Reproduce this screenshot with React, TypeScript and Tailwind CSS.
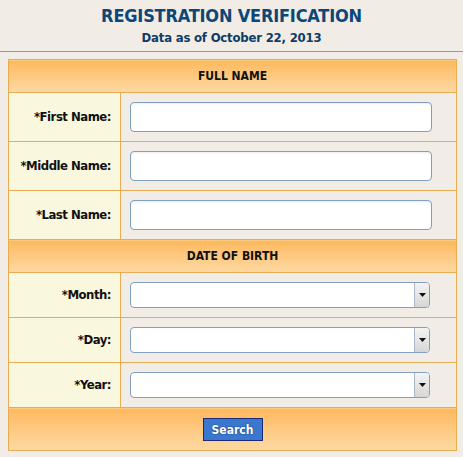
const font = { fontFamily: '"DejaVu Sans Condensed", "DejaVu Sans", Verdana, sans-serif' };

function Chevron() {
  return (
    <span className="flex h-full w-[15px] items-center justify-center rounded-r-[3px] border-l border-[#aab8c8] bg-gradient-to-b from-[#f4f4f4] to-[#d6d6d6]">
      <svg width="7" height="4" viewBox="0 0 7 4">
        <path d="M0 0h7L3.5 4z" fill="#111" />
      </svg>
    </span>
  );
}

const labelCls =
  'whitespace-nowrap border border-[#e8ad52] bg-[#f9f8de] pr-[9px] text-right text-[13px] font-bold tracking-[-0.5px] text-[#111]';

function TextRow({ label }: { label: string }) {
  return (
    <tr className="h-[49px]">
      <td className={labelCls}>*{label}:</td>
      <td className="border border-[#e8ad52] pl-[9px]">
        <input
          type="text"
          className="block h-[30px] w-[302px] rounded-[4px] border border-[#7f9fc3] bg-white shadow-[inset_0_1px_2px_rgba(0,0,0,0.08)] outline-none"
        />
      </td>
    </tr>
  );
}

function SelectRow({ label }: { label: string }) {
  return (
    <tr className="h-[45px]">
      <td className={labelCls}>*{label}:</td>
      <td className="border border-[#e8ad52] pl-[9px]">
        <div className="flex h-[26px] w-[300px] items-stretch rounded-[4px] border border-[#7f9fc3] bg-white">
          <div className="flex-1" />
          <Chevron />
        </div>
      </td>
    </tr>
  );
}

function HeaderRow({ title }: { title: string }) {
  return (
    <tr className="h-[33px]">
      <td
        colSpan={2}
        className="border border-[#e8ad52] bg-gradient-to-b from-[#fdb95c] to-[#fdd9a2] text-center text-[12px] font-bold text-[#111]"
      >
        {title}
      </td>
    </tr>
  );
}

export default function App() {
  return (
    <div className="min-h-[457px] w-[463px] bg-[#f1ece6]" style={font}>
      <div className="pt-[5px] text-center">
        <h1 className="text-[18px] font-bold leading-[22px] tracking-[-0.2px] text-[#0d4677]">REGISTRATION VERIFICATION</h1>
        <p className="mt-[3px] text-[13px] font-bold leading-[16px] tracking-[-0.2px] text-[#0d3c66]">Data as of October 22, 2013</p>
      </div>
      <div className="mt-[5px] h-[1px] bg-[#9a9a9a]" />
      <div className="px-[8px] pt-[7px]">
        <table className="w-[449px] table-fixed border-collapse border border-[#e8ad52]">
          <colgroup>
            <col className="w-[112px]" />
            <col />
          </colgroup>
          <tbody>
            <HeaderRow title="FULL NAME" />
            <TextRow label="First Name" />
            <TextRow label="Middle Name" />
            <TextRow label="Last Name" />
            <HeaderRow title="DATE OF BIRTH" />
            <SelectRow label="Month" />
            <SelectRow label="Day" />
            <SelectRow label="Year" />
            <tr className="h-[43px]">
              <td colSpan={2} className="border border-[#e8ad52] bg-gradient-to-b from-[#fdb95c] to-[#fdd9a2] text-center">
                <button className="h-[23px] w-[60px] border border-[#1c2878] bg-[#3a78cf] text-[12px] font-bold text-white [text-shadow:0_0_2px_rgba(0,0,60,0.6)]">
                  Search
                </button>
              </td>
            </tr>
          </tbody>
        </table>
      </div>
    </div>
  );
}
